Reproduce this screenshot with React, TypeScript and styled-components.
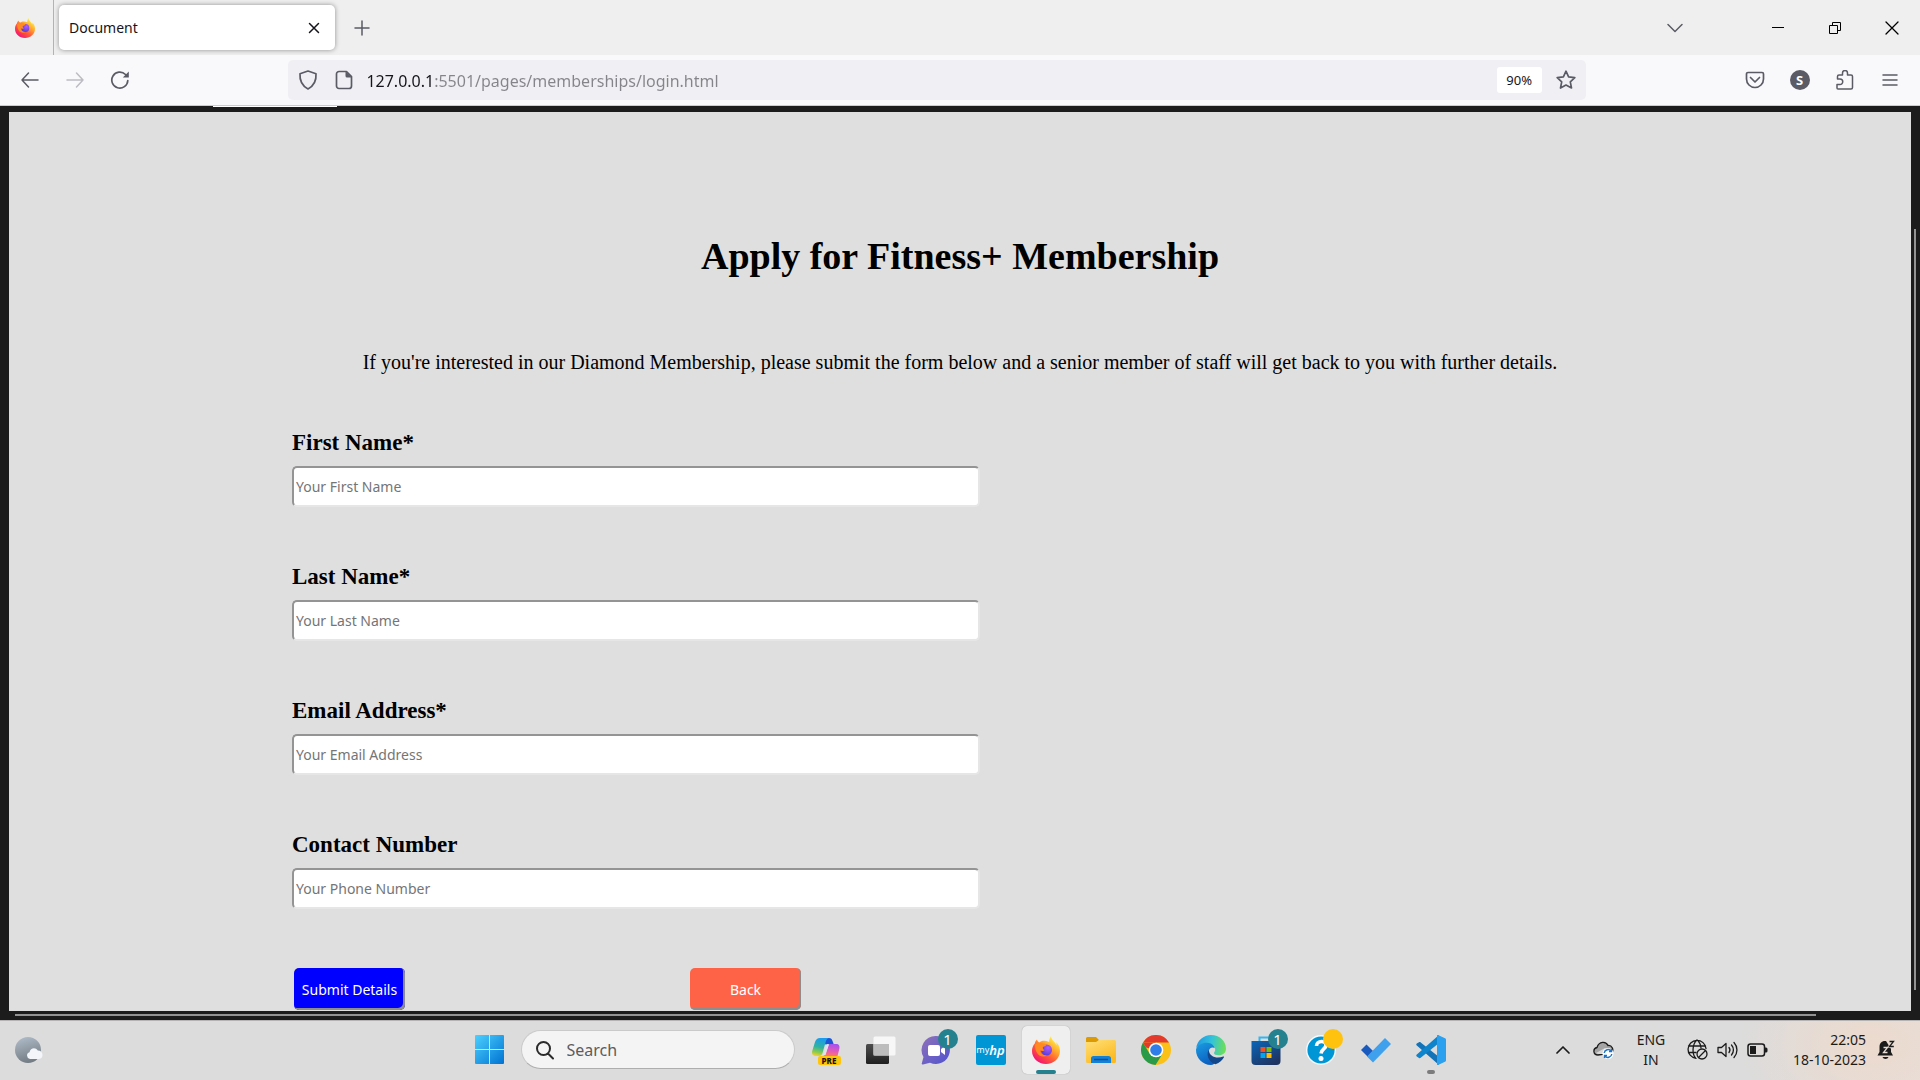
import React from "react";
import styled, { createGlobalStyle, css } from "styled-components";

const UI = `"Noto Sans", "Open Sans", sans-serif`;
const SERIF = `"Liberation Serif", "Times New Roman", serif`;

const GlobalStyle = createGlobalStyle`
  *, *::before, *::after { box-sizing: border-box; }
  body { margin: 0; background: #1c1c1c; font-family: ${UI}; }
  button, input { font-family: inherit; margin: 0; }
  svg { display: block; }
`;

const Screen = styled.div`
  display: flex;
  flex-direction: column;
  min-height: 100vh;
`;

const IconButton = styled.button<{ $w?: number }>`
  display: flex;
  align-items: center;
  justify-content: center;
  flex: none;
  width: ${(p) => p.$w ?? 45}px;
  height: 40px;
  padding: 0;
  border: 0;
  background: transparent;
  color: #5b5b66;
`;

/* ---------- browser tab strip ---------- */

const TabStrip = styled.header`
  display: flex;
  align-items: center;
  height: 55px;
  background: #efefef;
`;

const PinnedTab = styled.div`
  display: flex;
  align-items: center;
  justify-content: center;
  width: 54px;
  height: 55px;
  padding-right: 4px;
  border-right: 1px solid #b3b3b5;
`;

const Tab = styled.div`
  display: flex;
  align-items: center;
  justify-content: space-between;
  width: 276px;
  height: 45px;
  margin: 0 4px 0 5px;
  padding-left: 10px;
  border-radius: 5px;
  background: #fff;
  box-shadow: 0 0 5px rgba(0, 0, 0, 0.4);
  color: #15141a;
  font-size: 14px;
`;

const TabActions = styled.div`
  display: flex;
  flex: 1;
  justify-content: space-between;
`;

const WindowControls = styled.div`
  display: flex;
  margin-left: 52px;
`;

/* ---------- browser toolbar ---------- */

const Toolbar = styled.nav`
  display: flex;
  align-items: center;
  height: 51px;
  padding: 0 8px 0 7px;
  border-bottom: 1px solid #ccccce;
  background: #f9f9fb;
`;

const Spacer = styled.div`
  flex: 6 1 0;
`;

const AddressBar = styled.div`
  display: flex;
  align-items: center;
  flex: 53 1 0;
  min-width: 0;
  height: 40px;
  padding: 0 2px;
  border-radius: 5px;
  background: #f0f0f4;
`;

const AddressInput = styled.input`
  flex: 1;
  min-width: 0;
  height: 32px;
  margin-left: 4px;
  padding: 2px 0 0;
  border: 0;
  outline: 0;
  font-size: 16px;
  color: #15141a;
  background: linear-gradient(90deg, #15141a 68px, #84848a 68px);
  background-clip: text;
  -webkit-background-clip: text;
  -webkit-text-fill-color: transparent;
`;

const ZoomChip = styled.button`
  width: 45px;
  height: 26px;
  margin-right: 6px;
  padding: 0;
  border: 0;
  border-radius: 3px;
  background: #fff;
  color: #15141a;
  font-size: 13px;
`;

const Account = styled.span`
  display: grid;
  place-items: center;
  width: 20px;
  height: 20px;
  border-radius: 50%;
  background: #5b5b66;
  color: #fff;
  font-size: 13px;
  font-weight: 700;
`;

/* ---------- web page ---------- */

const Viewport = styled.main`
  position: relative;
  display: flex;
  flex: 1;
  padding: 6px 9px 9px;
  background: #1c1c1c;
`;

const Sheet = styled.div`
  flex: 1;
  padding: 122px 24px 0;
  background: #dfdfdf;
  color: #000;
  font-family: ${SERIF};
`;

const LoadingStrip = styled.span`
  position: absolute;
  top: 0;
  left: 213px;
  width: 124px;
  height: 1px;
  background: #fff;
`;

const VerticalThumb = styled.span`
  position: absolute;
  top: 123px;
  right: 4px;
  bottom: 30px;
  width: 2px;
  background: #939393;
`;

const HorizontalThumb = styled.span`
  position: absolute;
  right: 104px;
  bottom: 4px;
  left: 15px;
  height: 2px;
  background: #939393;
`;

const Title = styled.h1`
  margin: 0 0 72px;
  font-size: 38px;
  line-height: 44px;
  text-align: center;
`;

const Intro = styled.p`
  margin: 0 0 55px;
  font-size: 20px;
  line-height: 24px;
  text-align: center;
`;

const Form = styled.form`
  display: flex;
  flex-direction: column;
  gap: 56px;
  max-width: 1336px;
  margin: 0 auto;
`;

const Field = styled.div`
  display: flex;
  flex-direction: column;
  align-items: flex-start;
  gap: 9px;
`;

const FieldLabel = styled.label`
  font-size: 23px;
  font-weight: 700;
  line-height: 28px;
`;

const FieldInput = styled.input`
  width: 100%;
  max-width: 688px;
  height: 41px;
  padding: 0 2px;
  border: 2px solid;
  border-color: #949494 #e6e6e6 #e6e6e6 #949494;
  border-radius: 5px;
  background: #fff;
  font-family: ${UI};
  font-size: 14px;

  &::placeholder {
    color: #757575;
    opacity: 1;
  }
`;

const Actions = styled.div`
  display: flex;
  gap: 285px;
  padding: 3px 2px 0;
`;

const ActionButton = styled.button<{ $color: string }>`
  width: 111px;
  height: 42px;
  padding: 0;
  border: 0;
  border-radius: 5px;
  background: ${(p) => p.$color};
  box-shadow: inset -2px -2px 0 #8d8d8d;
  color: #fff;
  font-family: ${UI};
  font-size: 14px;
  white-space: nowrap;
`;

/* ---------- taskbar ---------- */

const Taskbar = styled.footer`
  display: grid;
  grid-template-columns: 1fr auto 1fr;
  align-items: center;
  height: 60px;
  padding-bottom: 2px;
  border-top: 1px solid #b5b3b3;
  background: radial-gradient(ellipse 130px 90px at calc(100% - 50px) 40%, #ecdacd, rgba(236, 218, 205, 0) 100%),
    linear-gradient(90deg, #dcdcdc 92%, #e6dfdc);
`;

const Pinned = styled.div`
  display: flex;
  align-items: center;
  gap: 7px;
`;

const AppButton = styled.button<{ $active?: boolean }>`
  position: relative;
  display: grid;
  place-items: center;
  width: 48px;
  height: 48px;
  padding: 0;
  border: 0;
  border-radius: 5px;
  background: transparent;
  ${(p) =>
    p.$active &&
    css`
      background: #efefef;
      box-shadow: 0 0 1px rgba(0, 0, 0, 0.35);
    `}
`;

const Badge = styled.span<{ $color?: string }>`
  position: absolute;
  top: 3px;
  right: 2px;
  display: grid;
  place-items: center;
  width: 20px;
  height: 20px;
  border-radius: 50%;
  background: ${(p) => p.$color ?? "#26818f"};
  color: #fff;
  font-size: 15px;
  line-height: 20px;
`;

const RunningMark = styled.span<{ $wide?: boolean }>`
  position: absolute;
  bottom: 0;
  left: 50%;
  width: ${(p) => (p.$wide ? 20 : 8)}px;
  height: 4px;
  border-radius: 2px;
  background: ${(p) => (p.$wide ? "#26818f" : "#7c7c7c")};
  transform: translateX(-50%);
`;

const SearchBox = styled.label`
  display: flex;
  align-items: center;
  gap: 12px;
  width: 274px;
  height: 39px;
  padding: 0 20px 0 13px;
  border: 1px solid #cacaca;
  border-bottom-color: #aeaeae;
  border-radius: 20px;
  background: #f4f4f4;
`;

const SearchInput = styled.input`
  flex: 1;
  min-width: 0;
  padding: 0;
  border: 0;
  outline: 0;
  background: transparent;
  font-size: 16px;

  &::placeholder {
    color: #5c5c5c;
    opacity: 1;
  }
`;

const Weather = styled.div`
  padding-left: 14px;
`;

const Tray = styled.div`
  display: flex;
  align-items: center;
  justify-content: flex-end;
  padding-right: 14px;
  color: #1b1b1b;
`;

const TrayText = styled.div<{ $align: string; $w: number }>`
  width: ${(p) => p.$w}px;
  font-size: 14px;
  line-height: 20px;
  text-align: ${(p) => p.$align};
`;

const TrayIcons = styled.div`
  display: flex;
  align-items: center;
  gap: 9px;
  margin: 0 8px;
`;

/* ---------- drawings ---------- */

function Firefox({ size, id }: { size: number; id: string }) {
  return (
    <svg width={size} height={size} viewBox="0 0 28 28" aria-hidden="true">
      <defs>
        <linearGradient id={`${id}a`} x1="0.85" y1="0.1" x2="0.2" y2="0.95">
          <stop offset="0" stopColor="#fff44f" />
          <stop offset="0.3" stopColor="#ffb02e" />
          <stop offset="0.6" stopColor="#ff5f35" />
          <stop offset="1" stopColor="#f50e75" />
        </linearGradient>
        <radialGradient id={`${id}b`} cx="0.65" cy="0.3" r="0.8">
          <stop offset="0" stopColor="#b25cff" />
          <stop offset="1" stopColor="#4a3ad0" />
        </radialGradient>
      </defs>
      <path
        d="M19 0c-1.500 2.500-2 4.300-1.800 6C13 4 9 4.800 7.500 6.500 6 6 5.300 4.800 5 3.500 3.500 5 3 6 2.800 7.500 1 9.500 0 12 0 15c0 7.300 6.200 13 14 13s14-5.700 14-13c0-4-1.600-7-4-8.800.5 1.200.6 2 .5 3C23 5.500 19.500 4.500 19 0z"
        fill={`url(#${id}a)`}
      />
      <circle cx="14.500" cy="14" r="5.500" fill={`url(#${id}b)`} />
      <path
        d="M3 9c2-2.500 5-3 7-1.500 1.500.2 3 .2 4.500.8.300 1.500-2 2.300-3.600 2.800-.3 1.900.4 2.700 1.800 3-1.400 1.400-3.200.8-4.700.2.500 3.700 4 6 7.500 4.900C9 23 3 18 3 9z"
        fill="#ff8a1f"
      />
    </svg>
  );
}

const stroke = {
  fill: "none",
  stroke: "currentColor",
  strokeWidth: 1.5,
  strokeLinecap: "round",
  strokeLinejoin: "round",
} as const;

function Line({ d, w = 20, h = 20, sw = 1.5, color }: { d: string; w?: number; h?: number; sw?: number; color?: string }) {
  return (
    <svg width={w} height={h} viewBox={`0 0 ${w} ${h}`} color={color} aria-hidden="true" {...stroke} strokeWidth={sw}>
      <path d={d} />
    </svg>
  );
}

const Reload = () => (
  <svg width="20" height="20" viewBox="0 0 20 20" aria-hidden="true" {...stroke} strokeWidth={1.7}>
    <path d="M17.800 10.500A8 8 0 1 1 15.500 4.500" />
    <path d="M18.800 1.500v6h-6z" fill="currentColor" stroke="none" />
  </svg>
);

const PageIcon = () => (
  <svg width="18" height="20" viewBox="0 0 18 20" aria-hidden="true" {...stroke} strokeWidth={1.7}>
    <path d="M4 1.500h7.500l5 5V16a2.500 2.500 0 0 1-2.500 2.500H4A2.500 2.500 0 0 1 1.500 16V4A2.500 2.500 0 0 1 4 1.500z" />
    <path d="M10.500 1l6.500 6.500h-5a1.500 1.500 0 0 1-1.500-1.500z" fill="currentColor" stroke="none" />
  </svg>
);

const MinimizeGlyph = () => (
  <svg width="12" height="12" viewBox="0 0 12 12" aria-hidden="true">
    <path d="M0 5.500h12" stroke="#000" />
  </svg>
);

const RestoreGlyph = () => (
  <svg width="12" height="12" viewBox="0 0 12 12" fill="none" stroke="#000" aria-hidden="true">
    <path d="M.5 3.500h8v8h-8zM3.500 3.500v-3h8v8h-3" />
  </svg>
);

const WindowsLogo = () => (
  <svg width="29" height="29" viewBox="0 0 29 29" aria-hidden="true">
    <defs>
      <linearGradient id="win" x1="0" y1="0" x2="1" y2="1">
        <stop offset="0" stopColor="#4cd0ff" />
        <stop offset="1" stopColor="#0072d2" />
      </linearGradient>
    </defs>
    <path
      fill="url(#win)"
      d="M1 0h13v14H0V1a1 1 0 0 1 1-1zM15 0h13a1 1 0 0 1 1 1v13H15zM0 15h14v14H1a1 1 0 0 1-1-1zM15 15h14v13a1 1 0 0 1-1 1H15z"
    />
  </svg>
);

const PreTag = styled.span`
  position: absolute;
  right: 9px;
  bottom: 9px;
  width: 23px;
  height: 9px;
  border-radius: 2px;
  background: #ffc40c;
  color: #1a1200;
  font-size: 8px;
  font-weight: 800;
  line-height: 9px;
  text-align: center;
`;

const Copilot = () => (
  <svg width="30" height="30" viewBox="0 0 30 30" aria-hidden="true">
    <defs>
      <linearGradient id="cpa" x1="0.5" y1="0" x2="0.3" y2="1">
        <stop offset="0" stopColor="#1a9bf0" />
        <stop offset="0.5" stopColor="#2fb3a0" />
        <stop offset="0.8" stopColor="#8ccb4a" />
        <stop offset="1" stopColor="#f5d02c" />
      </linearGradient>
      <linearGradient id="cpb" x1="0.6" y1="0" x2="0.4" y2="1">
        <stop offset="0" stopColor="#a452f0" />
        <stop offset="0.6" stopColor="#e65bb5" />
        <stop offset="1" stopColor="#ff7a62" />
      </linearGradient>
    </defs>
    <path fill="#1c55d6" d="M14 3h4c2 0 3 1 3.500 3L23 10h-8l-3-4z" />
    <path fill="url(#cpa)" d="M9 3h9c-2 .5-2.800 2-3.500 4.500L11.500 18c-.6 2-1.500 3-3.500 3H5c-3 0-4.500-2-3.800-5L4 7c1-2.800 2.500-4 5-4z" />
    <path fill="url(#cpb)" d="M18 9h7c3 0 4 2 3.300 5l-1.800 7H12c2-.5 2.500-2 3-3.500z" />
    <path fill="#dfe4ea" d="M15.500 9H18l-3.500 11H12z" />
  </svg>
);

const TaskView = () => (
  <svg width="32" height="30" viewBox="0 0 32 30" aria-hidden="true">
    <defs>
      <linearGradient id="tva" x1="0" y1="0" x2="0" y2="1">
        <stop offset="0" stopColor="#4d4d4d" />
        <stop offset="1" stopColor="#1f1f1f" />
      </linearGradient>
    </defs>
    <rect x="1" y="9" width="23" height="20" rx="1.500" fill="url(#tva)" />
    <rect x="8.500" y="1.500" width="22" height="19" rx="1.500" fill="#fafafa" fillOpacity="0.9" />
    <rect x="8.500" y="9" width="15.500" height="11.500" fill="#bdbdbd" />
  </svg>
);

const Chat = () => (
  <svg width="30" height="30" viewBox="0 0 30 30" aria-hidden="true">
    <defs>
      <linearGradient id="cha" x1="0" y1="0" x2="1" y2="1">
        <stop offset="0" stopColor="#8f72b8" />
        <stop offset="1" stopColor="#4f52d0" />
      </linearGradient>
    </defs>
    <path fill="url(#cha)" d="M15 1a14 14 0 1 1-6 26.700L2 29.500c-1 .3-1.500-.3-1.200-1.200L2.500 22A14 14 0 0 1 15 1z" />
    <rect x="7" y="10" width="12" height="11" rx="2" fill="#fff" />
    <path fill="#fff" d="M20 14l4-3v9l-4-3z" />
  </svg>
);

const HpTile = styled.span`
  display: flex;
  align-items: center;
  justify-content: center;
  width: 30px;
  height: 30px;
  border-radius: 2px;
  background: #0096d6;
  color: #fff;
  font-size: 9px;
  line-height: 14px;
`;

const HpMark = styled.i`
  font-size: 13px;
  font-weight: 600;
`;

const Explorer = () => (
  <svg width="30" height="30" viewBox="0 0 30 30" aria-hidden="true">
    <defs>
      <linearGradient id="exa" x1="0" y1="0" x2="0.6" y2="1">
        <stop offset="0" stopColor="#ffe07a" />
        <stop offset="1" stopColor="#fcba1f" />
      </linearGradient>
    </defs>
    <path fill="#dc9a05" d="M1.500 2H10l3 3-2 3H0V3.500A1.500 1.500 0 0 1 1.500 2z" />
    <path fill="url(#exa)" d="M0 7h10l3-2h15.500A1.500 1.500 0 0 1 30 6.500v20a1.500 1.500 0 0 1-1.500 1.500h-27A1.500 1.500 0 0 1 0 26.500z" />
    <path fill="#1481d8" d="M7.500 21h15a2.500 2.500 0 0 1 2.500 2.500V28H5v-4.500A2.500 2.500 0 0 1 7.500 21z" />
    <path stroke="#0b4f91" strokeWidth="1.500" d="M8 24.500h14" />
  </svg>
);

const Chrome = () => (
  <svg width="30" height="30" viewBox="0 0 30 30" aria-hidden="true">
    <circle cx="15" cy="15" r="15" fill="#fbc116" />
    <path fill="#e23b2e" d="M2 7.500a15 15 0 0 1 26 0H15z" />
    <path fill="#2a9a48" d="M2 7.500l6.500 11L15 22l5.500-1.500-6 9.500A15 15 0 0 1 2 7.500z" />
    <path fill="#e23b2e" d="M2 7.500l3 5L15 15V7.500z" />
    <circle cx="15" cy="15" r="7.300" fill="#fff" />
    <circle cx="15" cy="15" r="5.800" fill="#2f7de9" />
  </svg>
);

const Edge = () => (
  <svg width="30" height="30" viewBox="0 0 30 30" aria-hidden="true">
    <defs>
      <linearGradient id="eda" x1="0" y1="0.4" x2="1" y2="0.5">
        <stop offset="0" stopColor="#2196de" />
        <stop offset="0.5" stopColor="#33c2dc" />
        <stop offset="1" stopColor="#6fe052" />
      </linearGradient>
      <linearGradient id="edb" x1="0" y1="0" x2="0.5" y2="1">
        <stop offset="0" stopColor="#1b9de2" />
        <stop offset="1" stopColor="#0a5fc0" />
      </linearGradient>
    </defs>
    <path
      fill="url(#eda)"
      d="M.2 13C1.200 5.500 7.500 0 15 0c8.500 0 15 6.200 15 13.500 0 4.500-3.300 6.800-7 6.800-3.200 0-5-1-5-2.300 0-.8 1.200-1.500 1.200-3.500 0-3-3-5.500-7.200-5.500C7 9 2.500 10.500.2 13z"
    />
    <path
      fill="url(#edb)"
      d="M.1 14C1.500 10 6.500 7.500 11 7.700c4.500.2 7.200 2.800 7.700 5.600C17 11.500 13 12.500 12.500 17c-.3 5 3.500 9 8.500 9-2 2.600-4 4-6 4C6.500 30 0 23 0 15z"
    />
    <path fill="#12478c" d="M12.800 14.800C10.500 18 11 26.500 19.500 29.300 23.500 28 26.600 25 28 22.200c.3-.7-.2-1-.8-.7-6 2.700-14.200.5-14.400-6.700z" />
  </svg>
);

const Store = () => (
  <svg width="30" height="30" viewBox="0 0 30 30" aria-hidden="true">
    <defs>
      <linearGradient id="sta" x1="0" y1="0" x2="0.7" y2="1">
        <stop offset="0" stopColor="#0a66b8" />
        <stop offset="1" stopColor="#1f3360" />
      </linearGradient>
    </defs>
    <path fill="none" stroke="#33b5f0" strokeWidth="2" d="M8.500 7V2.500h13V7" />
    <path fill="url(#sta)" d="M.5 6h29v20a4 4 0 0 1-4 4h-21a4 4 0 0 1-4-4z" />
    <path fill="#f25022" d="M9.500 12h5v5h-5z" />
    <path fill="#7fba00" d="M15.500 12h5v5h-5z" />
    <path fill="#00a4ef" d="M9.500 18h5v5h-5z" />
    <path fill="#ffb900" d="M15.500 18h5v5h-5z" />
  </svg>
);

const Help = () => (
  <svg width="30" height="30" viewBox="0 0 30 30" aria-hidden="true">
    <circle cx="15" cy="15" r="14.300" fill="#0096d6" stroke="#f5fafd" strokeWidth="1.400" />
    <path d="M10.500 11c0-6 10-6 9.500-.5-.3 3.500-4.500 3.500-5 8" fill="none" stroke="#fff" strokeWidth="3.600" />
    <circle cx="15" cy="23.500" r="2.500" fill="#fff" />
  </svg>
);

const Todo = () => (
  <svg width="30" height="30" viewBox="0 0 30 30" aria-hidden="true">
    <path fill="#185abd" d="M0 15l5.500-5.500 6.500 6.500-5 6z" />
    <path fill="#3fa0ee" d="M6 21.500L24 3l6 6-18 18.500z" />
  </svg>
);

const VsCode = () => (
  <svg width="30" height="30" viewBox="0 0 30 30" aria-hidden="true">
    <path fill="#1273b8" d="M.8 8.500L3 7.200c.5-.3 1.200-.2 1.700.2L23 22v8L.8 10.500c-.7-.6-.7-1.400 0-2z" />
    <path fill="#0d84cc" d="M.8 21.500L3 23c.5.300 1.200.2 1.700-.2L23 8V0L.8 19.500c-.7.6-.7 1.400 0 2z" />
    <path fill="#2aa0ee" d="M22 0l7 3.200c.7.300 1 .8 1 1.500v20.600c0 .7-.3 1.200-1 1.500L22 30c-.7.200-1 0-1-1V1c0-1 .3-1.200 1-1z" />
  </svg>
);

const Moon = () => (
  <svg width="29" height="28" viewBox="0 0 29 28" aria-hidden="true">
    <defs>
      <linearGradient id="mna" x1="0.3" y1="0" x2="0.6" y2="1">
        <stop offset="0" stopColor="#adbac6" />
        <stop offset="1" stopColor="#717981" />
      </linearGradient>
    </defs>
    <circle cx="14" cy="14" r="13" fill="url(#mna)" />
    <path fill="#f3f5f8" d="M16 23a3.500 3.500 0 0 1-.5-6.800c.8-4.200 6-5.300 8.300-1.700 3 0 4.700 2 4.700 4.500S26.800 23 24.500 23z" />
  </svg>
);

const Cloud = () => (
  <svg width="21" height="20" viewBox="0 0 21 20" aria-hidden="true">
    <path d="M5 15C0 15-.5 8.500 4 7.500 6 1 13 1 15 5.500c4-.5 6 4 4 7.500z" fill="#a4a4a4" stroke="#1b1b1b" strokeWidth="1.300" />
    <path d="M3 13l9-5 7 3v3H5z" fill="#d9d9d9" />
    <circle cx="15" cy="13.500" r="5.500" fill="#fff" />
    <path d="M11.200 13a4 4 0 0 1 7-2m.3-2v2.500H16M18.800 14a4 4 0 0 1-7 2m-.3 2v-2.500H14" fill="none" stroke="#1a73c7" strokeWidth="1.400" />
  </svg>
);

const Globe = () => (
  <svg width="21" height="21" viewBox="0 0 21 21" aria-hidden="true" {...stroke} strokeWidth={1.3}>
    <path d="M9 19.300A9 9 0 1 1 19 9.500M1.500 7h17M1.500 13.500H9M10 1C5 5 5 15 8.500 19M10 1c2.500 2 3.800 4.800 4 8" />
    <circle cx="15" cy="15" r="5" />
    <path d="M11.500 18.500l7-7" />
  </svg>
);

const Speaker = () => (
  <svg width="21" height="20" viewBox="0 0 21 20" aria-hidden="true" {...stroke} strokeWidth={1.3}>
    <path d="M1 7.500h3.500L9 3.500v13l-4.500-4H1zM12 7.500a4 4 0 0 1 0 5M14.500 5a7.500 7.500 0 0 1 0 10M17 2.500a11 11 0 0 1 0 15" />
  </svg>
);

const Battery = () => (
  <svg width="21" height="14" viewBox="0 0 21 14" aria-hidden="true">
    <rect x="1" y="1" width="16.500" height="12" rx="2.500" fill="none" stroke="#1b1b1b" strokeWidth="1.500" />
    <path d="M3 3h6v8H3zM18 4.500h1a1.500 1.500 0 0 1 1.500 1.500v2A1.500 1.500 0 0 1 19 9.500h-1z" fill="#1b1b1b" />
  </svg>
);

const Bell = () => (
  <svg width="18" height="20" viewBox="0 0 18 20" aria-hidden="true">
    <path d="M8 1C4.500 1 2.500 3.500 2.500 7v5L.5 15.500h15.500l-2-3.500V9L9 1z" fill="#1b1b1b" />
    <path d="M5.500 17h6c-.8 2.500-5.200 2.500-6 0z" fill="#1b1b1b" />
    <path d="M6.500 7.500h4l-4 5h4" fill="none" stroke="#e6dcd4" strokeWidth="1.300" />
    <path d="M12.500 1.500h4l-4 5h4.300" fill="none" stroke="#e9ddd4" strokeWidth="2.600" />
    <path d="M12.500 1.500h4l-4 5h4.300" fill="none" stroke="#1b1b1b" strokeWidth="1.300" />
  </svg>
);

/* ---------- data ---------- */

const fields = [
  { id: "first-name", label: "First Name*", hint: "Your First Name", type: "text" },
  { id: "last-name", label: "Last Name*", hint: "Your Last Name", type: "text" },
  { id: "email", label: "Email Address*", hint: "Your Email Address", type: "email" },
  { id: "phone", label: "Contact Number", hint: "Your Phone Number", type: "tel" },
];

type AppItem = {
  name: string;
  icon: React.ReactNode;
  extra?: React.ReactNode;
  active?: boolean;
};

const apps: AppItem[] = [
  { name: "Copilot", icon: <Copilot />, extra: <PreTag>PRE</PreTag> },
  { name: "Task view", icon: <TaskView /> },
  { name: "Chat", icon: <Chat />, extra: <Badge>1</Badge> },
  { name: "myHP", icon: <HpTile>my<HpMark>hp</HpMark></HpTile> },
  { name: "Firefox", icon: <Firefox size={28} id="fft" />, active: true, extra: <RunningMark $wide /> },
  { name: "File Explorer", icon: <Explorer /> },
  { name: "Chrome", icon: <Chrome /> },
  { name: "Edge", icon: <Edge /> },
  { name: "Store", icon: <Store />, extra: <Badge>1</Badge> },
  { name: "Support", icon: <Help />, extra: <Badge $color="#ffc20e" /> },
  { name: "To Do", icon: <Todo /> },
  { name: "Code", icon: <VsCode />, extra: <RunningMark /> },
];

export default function App() {
  return (
    <Screen>
      <GlobalStyle />
      <TabStrip>
        <PinnedTab>
          <Firefox size={20} id="ffs" />
        </PinnedTab>
        <Tab>
          Document
          <IconButton aria-label="Close tab" $w={42}>
            <Line w={12} h={12} d="M1.500 1.500l9 9M10.500 1.500l-9 9" color="#15141a" />
          </IconButton>
        </Tab>
        <TabActions>
          <IconButton aria-label="New tab">
            <Line w={16} h={16} d="M8 1v14M1 8h14" />
          </IconButton>
          <IconButton aria-label="List all tabs">
            <Line w={16} h={10} d="M1 1.500l7 7 7-7" />
          </IconButton>
        </TabActions>
        <WindowControls>
          <IconButton aria-label="Minimize" $w={57}>
            <MinimizeGlyph />
          </IconButton>
          <IconButton aria-label="Restore" $w={57}>
            <RestoreGlyph />
          </IconButton>
          <IconButton aria-label="Close window" $w={57}>
            <Line w={14} h={14} sw={1.3} d="M1 1l12 12M13 1L1 13" color="#000" />
          </IconButton>
        </WindowControls>
      </TabStrip>

      <Toolbar>
        <IconButton aria-label="Back">
          <Line d="M18 10H2M8.500 3L2 10l6.500 7" />
        </IconButton>
        <IconButton aria-label="Forward">
          <Line d="M2 10h16M11.500 3l6.500 7-6.500 7" color="#bcbcc2" />
        </IconButton>
        <IconButton aria-label="Reload">
          <Reload />
        </IconButton>
        <Spacer />
        <AddressBar>
          <IconButton aria-label="Tracking protection" $w={36}>
            <Line d="M10 1l8 2.800c.5 7-2 12-8 15.200C4 15.800 1.500 10.800 2 3.800z" sw={1.7} />
          </IconButton>
          <IconButton aria-label="Site information" $w={36}>
            <PageIcon />
          </IconButton>
          <AddressInput aria-label="Address" defaultValue="127.0.0.1:5501/pages/memberships/login.html" spellCheck={false} />
          <ZoomChip>90%</ZoomChip>
          <IconButton aria-label="Bookmark" $w={36}>
            <Line d="M10 1.200l2.600 5.600 6.200.8-4.500 4.200 1.200 6.200L10 15l-5.500 3 1.200-6.200L1.200 7.600l6.200-.8z" sw={1.7} />
          </IconButton>
        </AddressBar>
        <Spacer />
        <IconButton aria-label="Pocket">
          <Line d="M3 2.500h14a1.500 1.500 0 0 1 1.500 1.500v5a8.500 8.500 0 0 1-17 0V4A1.500 1.500 0 0 1 3 2.500zM5.500 7.500L10 12l4.500-4.500" sw={1.7} />
        </IconButton>
        <IconButton aria-label="Account">
          <Account>S</Account>
        </IconButton>
        <IconButton aria-label="Extensions">
          <Line d="M3 19h13a1.500 1.500 0 0 0 1.500-1.500v-11a1.500 1.500 0 0 0-1.500-1.500h-3.500V3a2.500 2.500 0 0 0-5 0v2H4a1.500 1.500 0 0 0-1.500 1.500V9H5a2.500 2.500 0 0 1 0 5.500H2v3.500A1 1 0 0 0 3 19z" />
        </IconButton>
        <IconButton aria-label="Menu">
          <Line w={16} h={14} d="M1 2h14M1 7h14M1 12h14" />
        </IconButton>
      </Toolbar>

      <Viewport>
        <LoadingStrip />
        <Sheet>
          <Title>Apply for Fitness+ Membership</Title>
          <Intro>
            If you're interested in our Diamond Membership, please submit the form below and a senior member of staff
            will get back to you with further details.
          </Intro>
          <Form onSubmit={(e) => e.preventDefault()}>
            {fields.map((f) => (
              <Field key={f.id}>
                <FieldLabel htmlFor={f.id}>{f.label}</FieldLabel>
                <FieldInput id={f.id} type={f.type} placeholder={f.hint} />
              </Field>
            ))}
            <Actions>
              <ActionButton type="submit" $color="#0000ff">Submit Details</ActionButton>
              <ActionButton type="button" $color="#ff6347">Back</ActionButton>
            </Actions>
          </Form>
        </Sheet>
        <VerticalThumb />
        <HorizontalThumb />
      </Viewport>

      <Taskbar>
        <Weather>
          <Moon />
        </Weather>
        <Pinned>
          <AppButton aria-label="Start">
            <WindowsLogo />
          </AppButton>
          <SearchBox>
            <Line d="M8.500 2a6.500 6.500 0 1 0 0 13 6.500 6.500 0 0 0 0-13zM13 13.500l5 5" sw={2} color="#2a2a2a" />
            <SearchInput aria-label="Search" placeholder="Search" />
          </SearchBox>
          {apps.map((a) => (
            <AppButton key={a.name} aria-label={a.name} $active={a.active}>
              {a.icon}
              {a.extra}
            </AppButton>
          ))}
        </Pinned>
        <Tray>
          <IconButton aria-label="Show hidden icons" $w={40}>
            <Line w={14} h={10} d="M1 8l6-6 6 6" sw={1.7} color="#1b1b1b" />
          </IconButton>
          <IconButton aria-label="OneDrive" $w={40}>
            <Cloud />
          </IconButton>
          <TrayText $align="center" $w={56}>
            ENG
            <br />
            IN
          </TrayText>
          <TrayIcons>
            <Globe />
            <Speaker />
            <Battery />
          </TrayIcons>
          <TrayText $align="right" $w={90}>
            22:05
            <br />
            18-10-2023
          </TrayText>
          <IconButton aria-label="Notifications" $w={40}>
            <Bell />
          </IconButton>
        </Tray>
      </Taskbar>
    </Screen>
  );
}
